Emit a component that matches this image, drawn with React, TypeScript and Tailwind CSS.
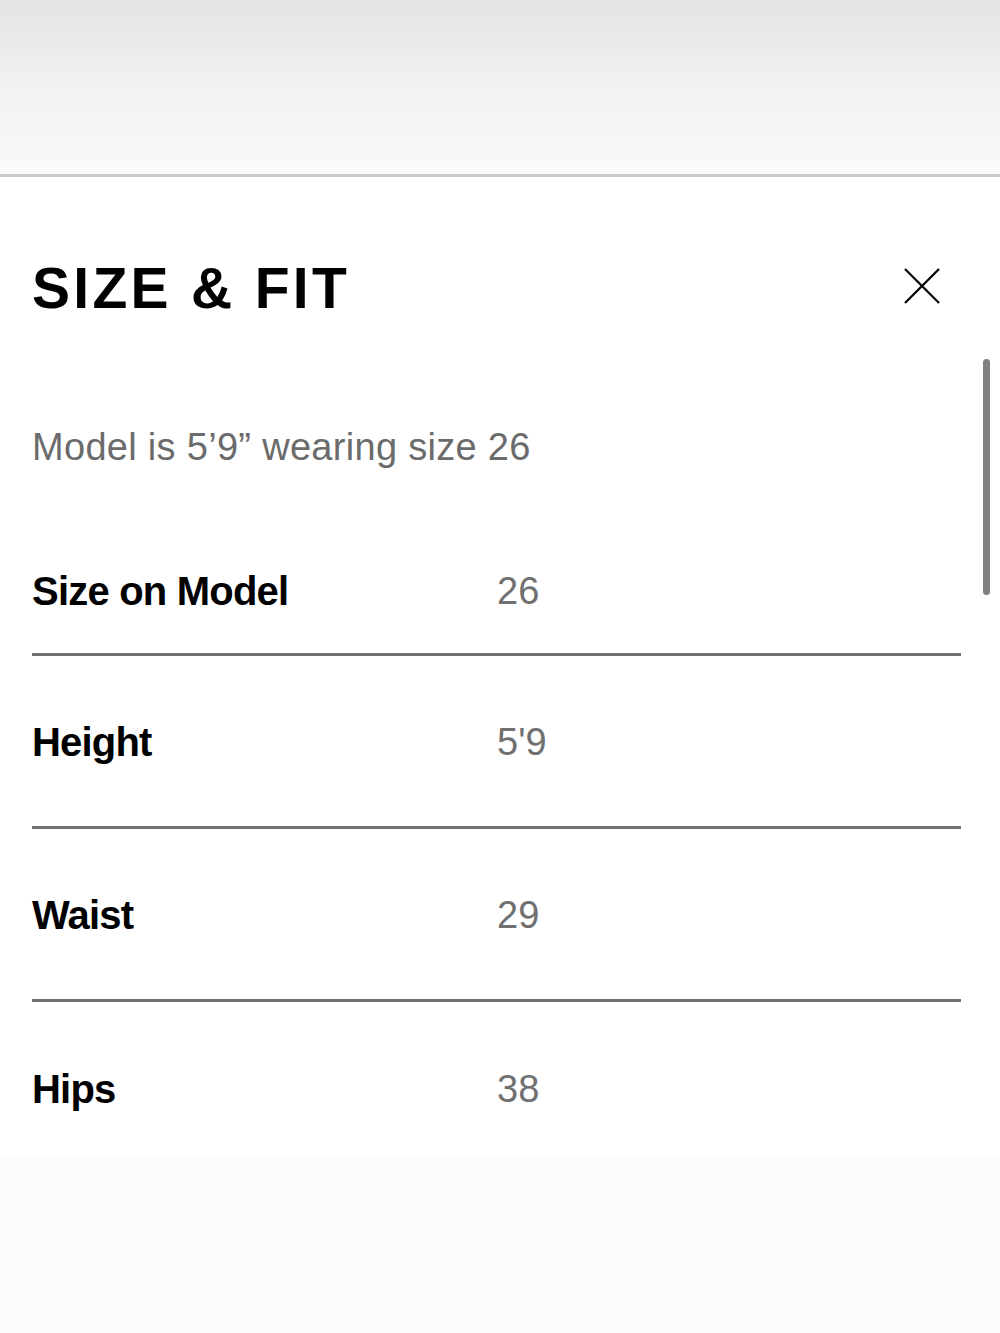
const ROWS = [
  { label: "Size on Model", value: "26" },
  { label: "Height", value: "5'9" },
  { label: "Waist", value: "29" },
  { label: "Hips", value: "38" },
];

function CloseIcon() {
  return (
    <svg width="38" height="38" viewBox="0 0 38 38" fill="none" stroke="#000" strokeWidth={2.2}>
      <path d="M2 2L36 36M36 2L2 36" />
    </svg>
  );
}

export default function App() {
  return (
    <div className="flex h-[1333px] w-[1000px] flex-col overflow-hidden bg-white font-['Liberation_Sans',Arial,sans-serif]">
      {/* Dimmed page behind the sheet */}
      <div className="h-[177px] shrink-0 border-b-[3px] border-[#cbcbcb] bg-gradient-to-b from-[#e4e4e4] via-[#f1f1f1] to-[#fafafa]" />

      {/* Sheet */}
      <div className="relative shrink-0 bg-white pb-[43px]">
        <div className="flex h-[222px] items-center justify-between pl-[32px] pr-[59px]">
          <h2 className="text-[57px] font-bold leading-none tracking-[3.3px] text-black">SIZE &amp; FIT</h2>
          <button aria-label="Close" className="mb-[4px] flex items-center">
            <CloseIcon />
          </button>
        </div>

        <p className="ml-[32px] mt-[24px] text-[38px] leading-[48px] tracking-[0.3px] text-[#6b6b6b]">
          Model is 5’9” wearing size 26
        </p>

        <div className="ml-[32px] w-[929px]">
          {ROWS.map((row, i) => (
            <div
              key={row.label}
              className={
                i === 0
                  ? "flex items-center border-b-[3px] border-[#6f6f6f] pb-[38px] pt-[96px]"
                  : i === ROWS.length - 1
                  ? "flex items-center pt-[63px]"
                  : "flex items-center border-b-[3px] border-[#6f6f6f] pb-[60px] pt-[62px]"
              }
            >
              <span className="w-[465px] text-[40px] font-bold leading-[48px] tracking-[-0.8px] text-black">
                {row.label}
              </span>
              <span className="text-[38px] leading-[48px] text-[#707070]">{row.value}</span>
            </div>
          ))}
        </div>

        {/* Scroll indicator */}
        <div className="absolute left-[983px] top-[182px] h-[236px] w-[7px] rounded-full bg-[#808080]" />
      </div>

      {/* Page below */}
      <div className="flex-1 bg-gradient-to-b from-[#fbfbfb] to-[#fcfcfc]" />
    </div>
  );
}
